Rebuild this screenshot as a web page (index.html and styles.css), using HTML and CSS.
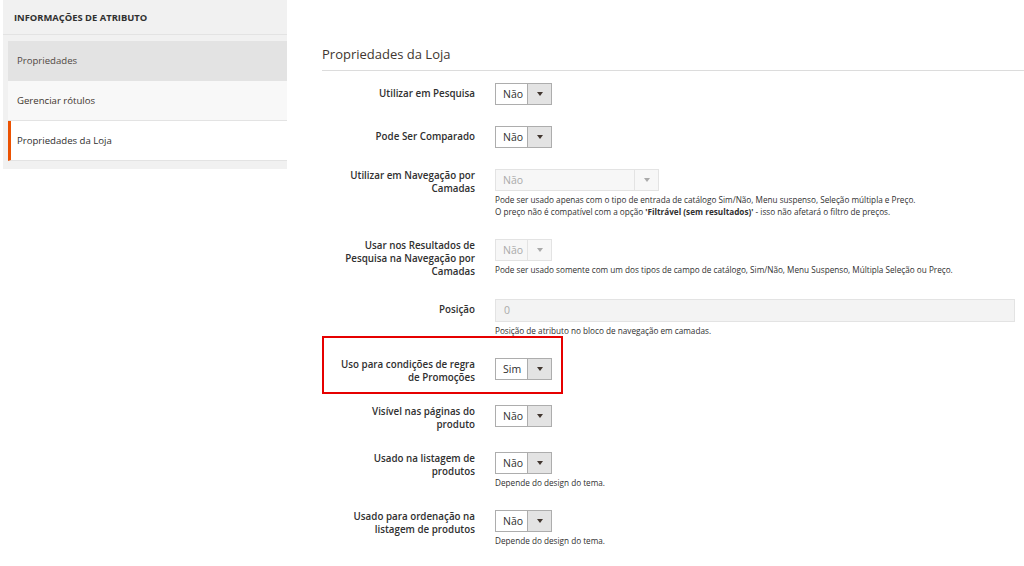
FILE: index.html
```html
<!DOCTYPE html>
<html>
  <head>
    <title>Propriedades da Loja</title>
    <meta charset="utf-8" />
    <link rel="stylesheet" href="styles.css">
  </head>
  <body>
    <div class="pagina">

      <div class="menu-lateral">
        <div class="menu-titulo">INFORMAÇÕES DE ATRIBUTO</div>
        <div class="menu-itens">
          <div class="menu-item ativo-cinza">Propriedades</div>
          <div class="menu-item">Gerenciar rótulos</div>
          <div class="menu-item selecionado">Propriedades da Loja</div>
        </div>
      </div>

      <div class="conteudo">
        <h2 class="titulo-secao">Propriedades da Loja</h2>

        <div class="campo">
          <div class="rotulo uma-linha">Utilizar em Pesquisa</div>
          <div class="controle">
            <div class="seletor"><span class="valor">Não</span><span class="botao-seta"><i class="seta"></i></span></div>
          </div>
        </div>

        <div class="campo">
          <div class="rotulo uma-linha">Pode Ser Comparado</div>
          <div class="controle">
            <div class="seletor"><span class="valor">Não</span><span class="botao-seta"><i class="seta"></i></span></div>
          </div>
        </div>

        <div class="campo">
          <div class="rotulo">Utilizar em Navegação por<br>Camadas</div>
          <div class="controle">
            <div class="seletor desativado largo"><span class="valor">Não</span><span class="botao-seta"><i class="seta"></i></span></div>
            <p class="nota">Pode ser usado apenas com o tipo de entrada de catálogo Sim/Não, Menu suspenso, Seleção múltipla e Preço.<br>O preço não é compatível com a opção <b>'Filtrável (sem resultados)'</b> - isso não afetará o filtro de preços.</p>
          </div>
        </div>

        <div class="campo">
          <div class="rotulo">Usar nos Resultados de<br>Pesquisa na Navegação por<br>Camadas</div>
          <div class="controle">
            <div class="seletor desativado"><span class="valor">Não</span><span class="botao-seta"><i class="seta"></i></span></div>
            <p class="nota">Pode ser usado somente com um dos tipos de campo de catálogo, Sim/Não, Menu Suspenso, Múltipla Seleção ou Preço.</p>
          </div>
        </div>

        <div class="campo">
          <div class="rotulo uma-linha">Posição</div>
          <div class="controle">
            <div class="texto-campo">0</div>
            <p class="nota">Posição de atributo no bloco de navegação em camadas.</p>
          </div>
        </div>

        <div class="campo destaque">
          <div class="rotulo">Uso para condições de regra<br>de Promoções</div>
          <div class="controle">
            <div class="seletor"><span class="valor">Sim</span><span class="botao-seta"><i class="seta"></i></span></div>
          </div>
          <span class="caixa-vermelha"></span>
        </div>

        <div class="campo">
          <div class="rotulo">Visível nas páginas do<br>produto</div>
          <div class="controle">
            <div class="seletor"><span class="valor">Não</span><span class="botao-seta"><i class="seta"></i></span></div>
          </div>
        </div>

        <div class="campo">
          <div class="rotulo">Usado na listagem de<br>produtos</div>
          <div class="controle">
            <div class="seletor"><span class="valor">Não</span><span class="botao-seta"><i class="seta"></i></span></div>
            <p class="nota">Depende do design do tema.</p>
          </div>
        </div>

        <div class="campo">
          <div class="rotulo">Usado para ordenação na<br>listagem de produtos</div>
          <div class="controle">
            <div class="seletor"><span class="valor">Não</span><span class="botao-seta"><i class="seta"></i></span></div>
            <p class="nota">Depende do design do tema.</p>
          </div>
        </div>

      </div>
    </div>
  </body>
</html>
```

FILE: styles.css
```css
body {
    margin: 0;
    background-color: white;
    font-family: "Open Sans", "Liberation Sans", sans-serif;
    color: #303030;
}

.pagina {
    display: flex;
    align-items: flex-start;
}

/* menu da esquerda */

.menu-lateral {
    margin-left: 3px;
    width: 284px;
    background-color: #f1f1f1;
    padding-bottom: 8px;
}

.menu-titulo {
    font-size: 9.4px;
    font-weight: 700;
    color: #303030;
    padding: 11px 0 0 11px;
    height: 23px;
    border-bottom: 1px solid #e3e3e3;
}

.menu-itens {
    margin: 6px 0 0 5px;
}

.menu-item {
    font-size: 9.6px;
    color: #41362f;
    height: 39px;
    line-height: 40px;
    padding-left: 9px;
    background-color: #f8f8f8;
    border-bottom: 1px solid #e3e3e3;
}

.ativo-cinza {
    background-color: #e3e3e3;
    color: #514943;
}

.selecionado {
    background-color: white;
    border-left: 3px solid #eb5202;
    padding-left: 6px;
    color: #303030;
}

/* conteudo */

.conteudo {
    flex: 1;
    margin-left: 35px;
}

.titulo-secao {
    font-size: 13px;
    font-weight: 400;
    color: #41362f;
    margin: 45px 0 0 0;
    padding-bottom: 7px;
    border-bottom: 1px solid #dcdcdc;
}

.campo {
    display: flex;
    margin-bottom: 21px;
    position: relative;
}

.titulo-secao + .campo {
    margin-top: 12px;
}

.rotulo {
    width: 153px;
    flex-shrink: 0;
    text-align: right;
    font-size: 9.8px;
    font-weight: 600;
    line-height: 13px;
    color: #303030;
}

.uma-linha {
    padding-top: 4px;
}

.controle {
    margin-left: 20px;
    flex: 1;
    padding-right: 9px;
}

.seletor {
    display: flex;
    width: 57px;
    height: 22px;
    box-sizing: border-box;
    border: 1px solid #adadad;
    font-size: 10.5px;
}

.valor {
    flex: 1;
    padding-left: 7px;
    line-height: 20px;
    background-color: white;
    color: #303030;
}

.botao-seta {
    width: 23px;
    background-color: #e3e3e3;
    border-left: 1px solid #adadad;
    display: flex;
    align-items: center;
    justify-content: center;
}

.seta {
    width: 0;
    height: 0;
    border-left: 3px solid transparent;
    border-right: 3px solid transparent;
    border-top: 4px solid #41362f;
}

.desativado {
    border-color: #e3e3e3;
}

.desativado .valor,
.desativado .botao-seta {
    background-color: #f7f7f7;
    color: #aaaaaa;
    border-color: #e3e3e3;
}

.desativado .seta {
    border-top-color: #aaaaaa;
}

.largo {
    width: 164px;
}

.texto-campo {
    height: 23px;
    box-sizing: border-box;
    border: 1px solid #e3e3e3;
    background-color: #f3f3f3;
    color: #aaaaaa;
    font-size: 10.5px;
    line-height: 21px;
    padding-left: 8px;
}

.nota {
    margin: 3px 0 0 0;
    font-size: 8.2px;
    line-height: 12px;
    color: #303030;
}

.nota b {
    font-weight: 700;
}

.caixa-vermelha {
    position: absolute;
    left: 0;
    top: -22px;
    width: 241px;
    height: 58px;
    box-sizing: border-box;
    border: 2px solid #e60000;
}
```
